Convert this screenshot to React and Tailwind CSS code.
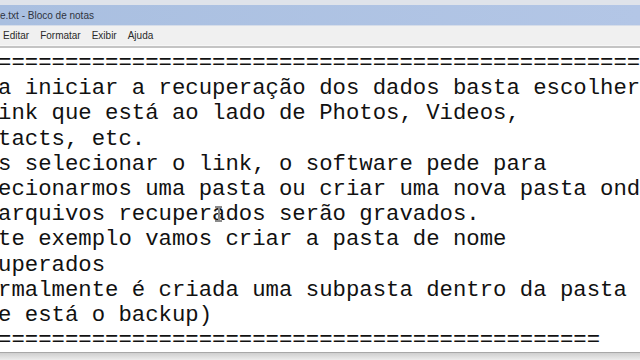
import React from 'react';

// Notepad window, scrolled a few columns to the right, as in the video frame.
const LINES = [
  '==================================================',
  'a iniciar a recuperação dos dados basta escolher',
  'ink que está ao lado de Photos, Videos,',
  'tacts, etc.',
  's selecionar o link, o software pede para',
  'ecionarmos uma pasta ou criar uma nova pasta onde',
  'arquivos recuperados serão gravados.',
  'te exemplo vamos criar a pasta de nome',
  'uperados',
  'rmalmente é criada uma subpasta dentro da pasta',
  'e está o backup)',
  '=============================================',
];

const MENU = ['Editar', 'Formatar', 'Exibir', 'Ajuda'];

const App = () => {
  return (
    <div className="w-[640px] h-[360px] overflow-hidden flex flex-col bg-white">
      {/* title bar */}
      <div className="h-[5px] bg-[#dfe3ea]" />
      <div className="h-[20px] flex items-center bg-gradient-to-r from-[#a9bfe0] to-[#b3c6e6] font-['Liberation_Sans',sans-serif] text-[10px] text-[#2f3440]">
        <span>e.txt - Bloco de notas</span>
      </div>
      <div className="h-[1px] bg-[#d6dde9]" />

      {/* menu bar */}
      <div className="h-[19px] flex items-center gap-[11px] pl-[3px] bg-[#f0f0f0] font-['Liberation_Sans',sans-serif] text-[10px] text-[#2a2a2a]">
        {MENU.map(m => (
          <span key={m}>{m}</span>
        ))}
      </div>
      <div className="h-[1px] bg-[#f7f7f7]" />
      <div className="h-[2px] bg-[#c4c4c4]" />

      {/* text area */}
      <div className="flex-1 relative overflow-hidden pt-[3px]">
        <div className="ml-[-2px] font-['Liberation_Mono',monospace] text-[22.3px] leading-[25.2px] text-[#111111] whitespace-pre">
          {LINES.map((l, i) => (
            <div key={i}>{l}</div>
          ))}
        </div>
        {/* mouse I-beam over "recuperados" */}
        <div className="absolute left-[215px] top-[158px] w-[7px] h-[16px] flex flex-col items-center">
          <div className="w-[7px] h-[2px] bg-[#8a8a8a]" />
          <div className="w-[2px] flex-1 bg-[#8a8a8a]" />
          <div className="w-[7px] h-[2px] bg-[#8a8a8a]" />
        </div>
      </div>

      {/* bottom edge of the window */}
      <div className="h-[1px] bg-[#a8a8a8]" />
      <div className="h-[7px] bg-gradient-to-b from-[#cfcfcf] to-[#ececec]" />
    </div>
  );
};

export default App;
